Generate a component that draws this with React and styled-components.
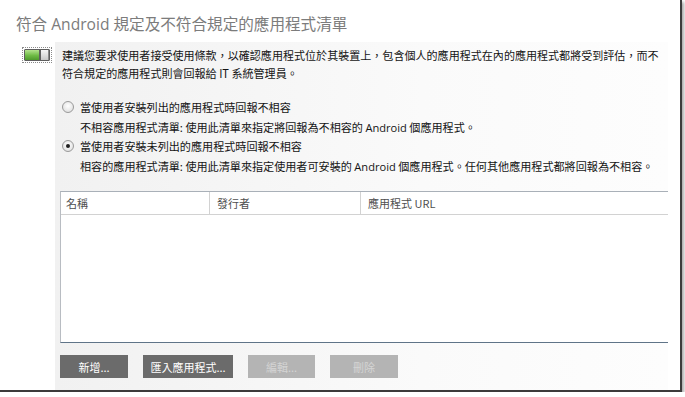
import React from "react";
import styled, { createGlobalStyle } from "styled-components";

const GlobalStyle = createGlobalStyle`
  body {
    margin: 0;
    background: #ffffff;
    font-family: "Open Sans", "Noto Sans CJK TC", sans-serif;
  }
`;

const Window = styled.div`
  width: 682px;
  height: 392px;
  box-sizing: border-box;
  background: #ffffff;
  border-right: 2px solid #3c3c3c;
  border-bottom: 2px solid #3c3c3c;
  box-shadow: 2px 2px 3px rgba(0, 0, 0, 0.35);
  display: flex;
  flex-direction: column;
  overflow: hidden;
`;

const Title = styled.h1`
  margin: 0;
  padding: 13px 0 0 16px;
  height: 29px;
  box-sizing: border-box;
  font-size: 15.6px;
  font-weight: 400;
  line-height: 22px;
  color: #7c7c7c;
  font-family: "Open Sans", "Noto Sans CJK TC", sans-serif;
`;

const Body = styled.div`
  flex: 1;
  display: flex;
  padding-top: 13px;
`;

const ToggleCol = styled.div`
  width: 55px;
  padding: 5px 0 0 22px;
  box-sizing: border-box;
`;

const ToggleFocus = styled.div`
  width: 30px;
  height: 16px;
  box-sizing: border-box;
  border: 1px dotted #8a8a8a;
  padding: 1px;
`;

const ToggleTrack = styled.div`
  height: 12px;
  display: flex;
  border: 1px solid #5e5e5e;
  border-radius: 1px;
  box-sizing: border-box;
`;

const ToggleFill = styled.div`
  flex: 1;
  background: linear-gradient(#b4e38e, #6fbb45 55%, #4e9a2c);
`;

const ToggleThumb = styled.div`
  width: 10px;
  box-sizing: border-box;
  background: linear-gradient(#f6f6f6, #c8c8c8);
  border-left: 2px solid #5e5e5e;
  border-right: 1px solid #8a8a8a;
`;

const Panel = styled.div`
  width: 613px;
  background: linear-gradient(to right, #f1f1f1, #fafafa 60%, #fdfdfd);
  padding: 4px 0 0 5px;
  box-sizing: border-box;
  display: flex;
  flex-direction: column;
  font-family: "Noto Sans CJK TC", sans-serif;
  color: #141414;
`;

const Intro = styled.p`
  margin: 0 0 0 2px;
  font-size: 11.05px;
  line-height: 18px;
  white-space: nowrap;
`;

const Latin = styled.span`
  font-family: "Open Sans", "Noto Sans CJK TC", sans-serif;
`;

const Options = styled.div`
  margin-top: 16px;
  display: flex;
  flex-direction: column;
`;

const Option = styled.label`
  display: grid;
  grid-template-columns: 18px 1fr;
  margin-left: 2px;
  font-size: 11.1px;
  white-space: nowrap;
`;

const Radio = styled.span`
  width: 12px;
  height: 12px;
  margin-top: 3px;
  border-radius: 50%;
  box-sizing: border-box;
  border: 1px solid #9a9a9a;
  background: radial-gradient(circle at 50% 40%, #ffffff, #e4e4e4 70%, #cfcfcf);
  display: flex;
  align-items: center;
  justify-content: center;

  &::after {
    content: "";
    width: 4px;
    height: 4px;
    border-radius: 50%;
    background: ${(p) => (p.$checked ? "#1e1e1e" : "transparent")};
  }
`;

const OptionText = styled.div`
  display: flex;
  flex-direction: column;
`;

const Line = styled.div`
  height: 19.5px;
  line-height: 19.5px;
`;

const Table = styled.div`
  margin-top: 15px;
  height: 150px;
  background: #ffffff;
  border-top: 1px solid #a9b0b8;
  border-left: 1px solid #b8bcc2;
  border-bottom: 1px solid #5f7488;
  display: flex;
  flex-direction: column;
`;

const HeaderRow = styled.div`
  display: grid;
  grid-template-columns: 148px 151px 1fr;
  height: 22px;
  border-bottom: 1px solid #d2d2d2;
`;

const HeaderCell = styled.div`
  padding-left: ${(p) => (p.$first ? "5px" : "7px")};
  border-left: ${(p) => (p.$first ? "none" : "1px solid #d2d2d2")};
  font-size: 11px;
  line-height: 22px;
  color: #4e4e4e;
  font-family: "Noto Sans CJK TC", sans-serif;
`;

const Buttons = styled.div`
  display: flex;
  gap: 15px;
  margin-top: 12px;
`;

const Button = styled.button`
  height: 23px;
  width: ${(p) => p.$w}px;
  border: none;
  padding: 0;
  background: ${(p) => (p.disabled ? "#b4b4b4" : "#6b6b6b")};
  color: ${(p) => (p.disabled ? "#d4d4d4" : "#ffffff")};
  font-size: 11px;
  font-family: "Noto Sans CJK TC", sans-serif;
  cursor: default;
`;

export default function App() {
  return (
    <>
      <GlobalStyle />
      <Window>
        <Title>符合 Android 規定及不符合規定的應用程式清單</Title>
        <Body>
          <ToggleCol>
            <ToggleFocus>
              <ToggleTrack>
                <ToggleFill />
                <ToggleThumb />
              </ToggleTrack>
            </ToggleFocus>
          </ToggleCol>
          <Panel>
            <Intro>
              建議您要求使用者接受使用條款，以確認應用程式位於其裝置上，包含個人的應用程式在內的應用程式都將受到評估，而不
              <br />
              符合規定的應用程式則會回報給 IT 系統管理員。
            </Intro>
            <Options>
              <Option>
                <Radio />
                <OptionText>
                  <Line>當使用者安裝列出的應用程式時回報不相容</Line>
                  <Line>
                    不相容應用程式清單: 使用此清單來指定將回報為不相容的 <Latin>Android</Latin>&nbsp;個應用程式。
                  </Line>
                </OptionText>
              </Option>
              <Option>
                <Radio $checked />
                <OptionText>
                  <Line>當使用者安裝未列出的應用程式時回報不相容</Line>
                  <Line>
                    相容的應用程式清單: 使用此清單來指定使用者可安裝的 <Latin>Android</Latin>&nbsp;個應用程式。任何其他應用程式都將回報為不相容。
                  </Line>
                </OptionText>
              </Option>
            </Options>
            <Table>
              <HeaderRow>
                <HeaderCell $first>名稱</HeaderCell>
                <HeaderCell>發行者</HeaderCell>
                <HeaderCell>應用程式 URL</HeaderCell>
              </HeaderRow>
            </Table>
            <Buttons>
              <Button $w={68}>新增...</Button>
              <Button $w={90}>匯入應用程式...</Button>
              <Button $w={67} disabled>編輯...</Button>
              <Button $w={68} disabled>刪除</Button>
            </Buttons>
          </Panel>
        </Body>
      </Window>
    </>
  );
}
